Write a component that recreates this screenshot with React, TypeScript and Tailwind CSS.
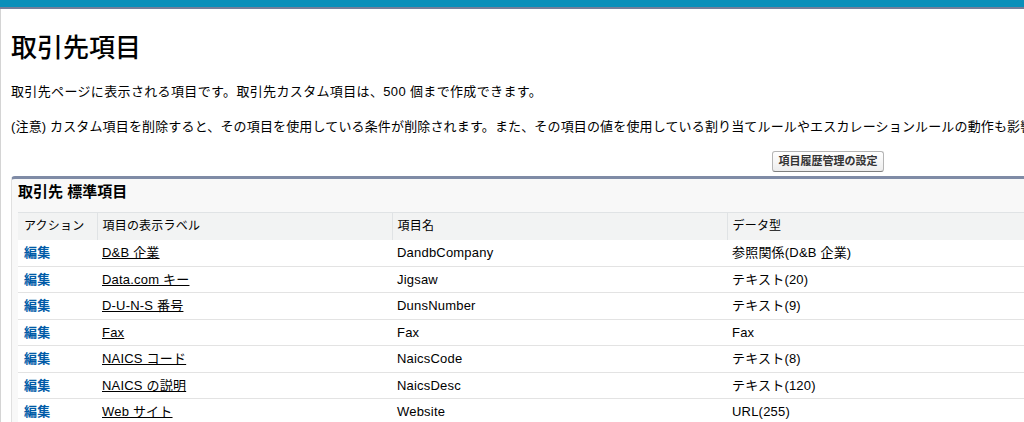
import React from 'react';

interface FieldRow {
  label: string;
  name: string;
  type: string;
}

const rows: FieldRow[] = [
  { label: 'D&B 企業', name: 'DandbCompany', type: '参照関係(D&B 企業)' },
  { label: 'Data.com キー', name: 'Jigsaw', type: 'テキスト(20)' },
  { label: 'D-U-N-S 番号', name: 'DunsNumber', type: 'テキスト(9)' },
  { label: 'Fax', name: 'Fax', type: 'Fax' },
  { label: 'NAICS コード', name: 'NaicsCode', type: 'テキスト(8)' },
  { label: 'NAICS の説明', name: 'NaicsDesc', type: 'テキスト(120)' },
  { label: 'Web サイト', name: 'Website', type: 'URL(255)' },
  { label: '業種', name: 'Industry', type: '選択リスト' },
];

const App: React.FC = () => {
  return (
    <div className="h-[422px] w-[1024px] overflow-hidden bg-white text-black font-['Liberation_Sans','Noto_Sans_CJK_JP',sans-serif]">
      {/* Top bar */}
      <div className="h-[7px] bg-[#0a8fba]" />
      <div className="h-[2px] bg-[#757e9a]" />

      <div className="flex h-full">
        <div className="w-[2px] bg-[#f3f3f3] border-r border-[#d4d4d4]" />

        <div className="flex-1 pl-[10px] whitespace-nowrap">
          {/* Page title */}
          <h1 className="mt-[24px] text-[26px] leading-[30px] font-medium">取引先項目</h1>

          <p className="mt-[21px] text-[13px] leading-[16px] tracking-[0.35px]">
            取引先ページに表示される項目です。取引先カスタム項目は、500 個まで作成できます。
          </p>
          <p className="mt-[19px] text-[13px] leading-[16px] tracking-[0.15px]">
            (注意) カスタム項目を削除すると、その項目を使用している条件が削除されます。また、その項目の値を使用している割り当てルールやエスカレーションルールの動作も影響を受けます。
          </p>

          <div className="mt-[13px] pl-[761px]">
            <button className="h-[21px] w-[112px] rounded-[3px] border border-[#b5b5b5] border-b-[#7f7f7f] bg-gradient-to-b from-white to-[#ededed] text-[11px] font-bold leading-[19px] text-[#333]">
              項目履歴管理の設定
            </button>
          </div>

          {/* Panel */}
          <div className="mt-[4px] w-[1100px] rounded-tl-[4px] border-l border-t-[3px] border-[#e0e0e0] border-t-[#7f8ba6] bg-[#f8f8f8]">
            <div className="h-[33px] pl-[6px] pt-[4px]">
              <h3 className="text-[15px] font-bold leading-[18px]">取引先 標準項目</h3>
            </div>

            <div className="ml-[6px]">
              <table className="w-full border-collapse bg-white text-[13px] tracking-[0.2px]">
                <thead>
                  <tr className="h-[27px] border-t border-[#e0e3e5] bg-[#f2f3f3] text-[12px] text-left">
                    <th className="w-[79px] border-r border-[#e0e3e5] pl-[6px] font-normal">アクション</th>
                    <th className="w-[295px] border-r border-[#e0e3e5] pl-[5px] font-normal">項目の表示ラベル</th>
                    <th className="w-[335px] border-r border-[#e0e3e5] pl-[5px] font-normal">項目名</th>
                    <th className="pl-[5px] font-normal">データ型</th>
                  </tr>
                </thead>
                <tbody>
                  {rows.map((r) => (
                    <tr key={r.name} className="h-[26.5px] border-b border-[#e3e3e3]">
                      <td className="pl-[6px]">
                        <a className="font-bold text-[#015ba7]" href="#">編集</a>
                      </td>
                      <td className="pl-[5px]">
                        <a className="underline text-black" href="#">{r.label}</a>
                      </td>
                      <td className="pl-[5px]">{r.name}</td>
                      <td className="pl-[5px]">{r.type}</td>
                    </tr>
                  ))}
                </tbody>
              </table>
            </div>
          </div>
        </div>
      </div>
    </div>
  );
};

export default App;
